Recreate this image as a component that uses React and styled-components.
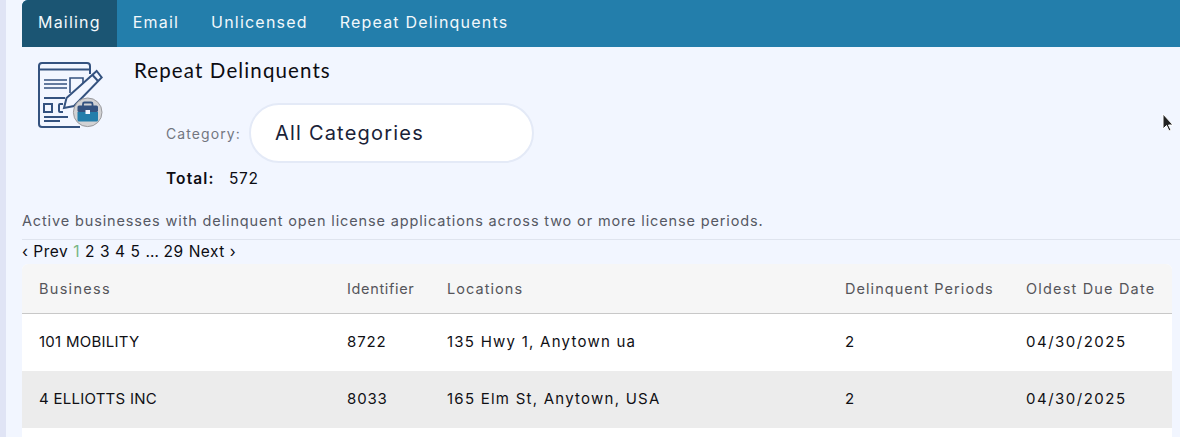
import React from "react";
import styled, { createGlobalStyle } from "styled-components";

const GlobalStyle = createGlobalStyle`
  html, body {
    margin: 0;
    padding: 0;
    height: 437px;
    overflow: hidden;
    background: #f2f6ff;
    font-family: Inter, "Liberation Sans", sans-serif;
  }
`;

const Page = styled.div`
  position: relative;
  width: 1180px;
  height: 437px;
  overflow: hidden;
  box-sizing: border-box;
  background: #f2f6ff;
  border-left: 6px solid #e0e4f5;
  padding-left: 16px;
`;

const Tabs = styled.nav`
  display: flex;
  height: 47px;
  background: #237eab;
  border-top-left-radius: 6px;
`;

const Tab = styled.a`
  display: flex;
  align-items: center;
  padding: 0 16px 3px;
  font-size: 16px;
  font-weight: 400;
  letter-spacing: 1.2px;
  color: #f2f8fb;
  background: ${(props) => (props.active ? "#1b5573" : "transparent")};
  border-top-left-radius: ${(props) => (props.active ? "6px" : "0")};
`;

const Header = styled.div`
  display: flex;
  height: 164px;
`;

const IconBox = styled.div`
  width: 113px;
  padding: 15px 0 0 15px;
  box-sizing: border-box;
`;

const HeaderBody = styled.div`
  display: flex;
  flex-direction: column;
`;

const Title = styled.h1`
  margin: 10px 0 0 -1px;
  font-family: Lato, sans-serif;
  font-size: 20.5px;
  line-height: 26px;
  font-weight: 400;
  letter-spacing: 1.12px;
  color: #0c0c12;
`;

const FilterRow = styled.div`
  display: flex;
  align-items: center;
  margin: 20px 0 0 31px;
`;

const FilterLabel = styled.label`
  font-size: 14px;
  letter-spacing: 1.1px;
  color: #73767f;
  margin-right: 8px;
`;

const SelectBox = styled.div`
  display: flex;
  align-items: center;
  box-sizing: border-box;
  width: 285px;
  height: 60px;
  padding-left: 24px;
  background: #fff;
  border: 2px solid #e4eaf7;
  border-radius: 30px;
  font-size: 20px;
  letter-spacing: 1.2px;
  color: #1a2238;
`;

const TotalRow = styled.div`
  display: flex;
  margin: 5px 0 0 31px;
  font-size: 15.5px;
  line-height: 22px;
  letter-spacing: 0.6px;
  color: #0c0c12;
`;

const TotalLabel = styled.strong`
  font-weight: 600;
  letter-spacing: 1.1px;
  width: 63px;
`;

const Summary = styled.p`
  margin: 0;
  height: 29px;
  line-height: 20px;
  box-sizing: border-box;
  border-bottom: 1px solid #dfe4ee;
  font-size: 14.5px;
  letter-spacing: 0.86px;
  color: #565964;
`;

const Pager = styled.div`
  display: flex;
  height: 22px;
  margin-bottom: 2px;
  align-items: center;
  gap: 5px;
  font-size: 15.5px;
  letter-spacing: 0.5px;
  color: #0c0c12;
`;

const PageNow = styled.em`
  font-style: normal;
  color: #79b583;
`;

const Ellipsis = styled.span`
  letter-spacing: -0.4px;
`;

const TableWrap = styled.div`
  width: 1150px;
  height: 200px;
  background: #fff;
  border-top-left-radius: 6px;
  border-top-right-radius: 6px;
  overflow: hidden;
`;

const Table = styled.table`
  width: 100%;
  border-collapse: collapse;
  table-layout: fixed;
`;

const Th = styled.th`
  height: 48px;
  padding: 0 0 1px 17px;
  background: #f6f6f6;
  border-bottom: 1px solid #c8c8c8;
  text-align: left;
  font-size: 14.5px;
  font-weight: 400;
  letter-spacing: ${(props) => props.spacing}px;
  color: #55555a;
  white-space: nowrap;
`;

const Row = styled.tr`
  background: ${(props) => (props.striped ? "#ececec" : "#fff")};
`;

const Td = styled.td`
  height: 57px;
  padding: 0 0 2px 17px;
  box-sizing: border-box;
  font-size: 15px;
  letter-spacing: ${(props) => props.spacing}px;
  color: #101015;
  white-space: nowrap;
`;

const Cursor = styled.svg`
  position: absolute;
  left: 1156px;
  top: 113px;
`;

const columns = [
  { name: "Business", width: 308, headSpacing: 1.3, spacing: 0.25 },
  { name: "Identifier", width: 100, headSpacing: 0.65, spacing: 0.85 },
  { name: "Locations", width: 398, headSpacing: 1.05, spacing: 1.24 },
  { name: "Delinquent Periods", width: 181, headSpacing: 1.05, spacing: 1 },
  { name: "Oldest Due Date", width: 163, headSpacing: 1.18, spacing: 1.5 },
];

const rows = [
  ["101 MOBILITY", "8722", "135 Hwy 1, Anytown ua", "2", "04/30/2025"],
  ["4 ELLIOTTS INC", "8033", "165 Elm St, Anytown, USA", "2", "04/30/2025"],
];

const ReportIcon = () => (
  <svg width="66" height="66" viewBox="37 62 66 66" fill="none">
    <g stroke="#34527f" strokeWidth="2">
      <path d="M90 74V66a3 3 0 0 0-3-3H42a3 3 0 0 0-3 3v58a3 3 0 0 0 3 3h38" />
      <path d="M39 69.500H90" />
      <path d="M44 80h23M44 84h23M44 88h23" strokeWidth="1.600" />
      <path d="M70 93V78H83V83" strokeWidth="1.600" />
      <path d="M44 98h21" />
      <path d="M44 104h8v8h-8z" />
      <path d="M63 104h-3a1 1 0 0 0-1 1v6a1 1 0 0 0 1 1h3" />
      <path d="M44 117h24M44 121h16" />
      <path d="M96.700 71l5 6.500L74 106l-10 2 2.500-10z" fill="#f2f6ff" />
      <path d="M92.500 75l5.500 6" />
    </g>
    <circle cx="87.700" cy="112.300" r="14.300" fill="#d2d2d4" stroke="#9a9a9e" strokeWidth="1" />
    <path d="M83 106v-2a1.500 1.500 0 0 1 1.500-1.500h6.500a1.500 1.500 0 0 1 1.500 1.500v2" stroke="#34527f" strokeWidth="1.800" />
    <rect x="77.500" y="105.500" width="20.500" height="6.500" rx="1.500" fill="#34527f" />
    <path d="M77.500 112h20.500v8a1.500 1.500 0 0 1-1.500 1.500h-17.500a1.500 1.500 0 0 1-1.500-1.500z" fill="#237eab" />
    <rect x="85.500" y="110" width="4.500" height="4" fill="#f2f6ff" />
  </svg>
);

const App = () => {
  return (
    <>
      <GlobalStyle />
      <Page>
        <Tabs>
          <Tab active>Mailing</Tab>
          <Tab>Email</Tab>
          <Tab>Unlicensed</Tab>
          <Tab>Repeat Delinquents</Tab>
        </Tabs>
        <Header>
          <IconBox>
            <ReportIcon />
          </IconBox>
          <HeaderBody>
            <Title>Repeat Delinquents</Title>
            <FilterRow>
              <FilterLabel>Category:</FilterLabel>
              <SelectBox>All Categories</SelectBox>
            </FilterRow>
            <TotalRow>
              <TotalLabel>Total:</TotalLabel>
              <span>572</span>
            </TotalRow>
          </HeaderBody>
        </Header>
        <Summary>
          Active businesses with delinquent open license applications across two or more license periods.
        </Summary>
        <Pager>
          <span>‹ Prev</span>
          <PageNow>1</PageNow>
          <span>2</span>
          <span>3</span>
          <span>4</span>
          <span>5</span>
          <Ellipsis>…</Ellipsis>
          <span>29</span>
          <span>Next ›</span>
        </Pager>
        <TableWrap>
          <Table>
            <colgroup>
              {columns.map((col) => (
                <col key={col.name} style={{ width: col.width }} />
              ))}
            </colgroup>
            <thead>
              <tr>
                {columns.map((col) => (
                  <Th key={col.name} spacing={col.headSpacing}>
                    {col.name}
                  </Th>
                ))}
              </tr>
            </thead>
            <tbody>
              {rows.map((row, i) => (
                <Row key={row[1]} striped={i % 2 === 1}>
                  {row.map((cell, j) => (
                    <Td key={j} spacing={columns[j].spacing}>
                      {cell}
                    </Td>
                  ))}
                </Row>
              ))}
            </tbody>
          </Table>
        </TableWrap>
        <Cursor width="14" height="20" viewBox="0 0 14 20">
          <path d="M1 1v15l3.500-3.500 2.500 5.500 2-1-2.500-5H11z" fill="#222" stroke="#fff" strokeWidth="1" />
        </Cursor>
      </Page>
    </>
  );
};

export default App;
